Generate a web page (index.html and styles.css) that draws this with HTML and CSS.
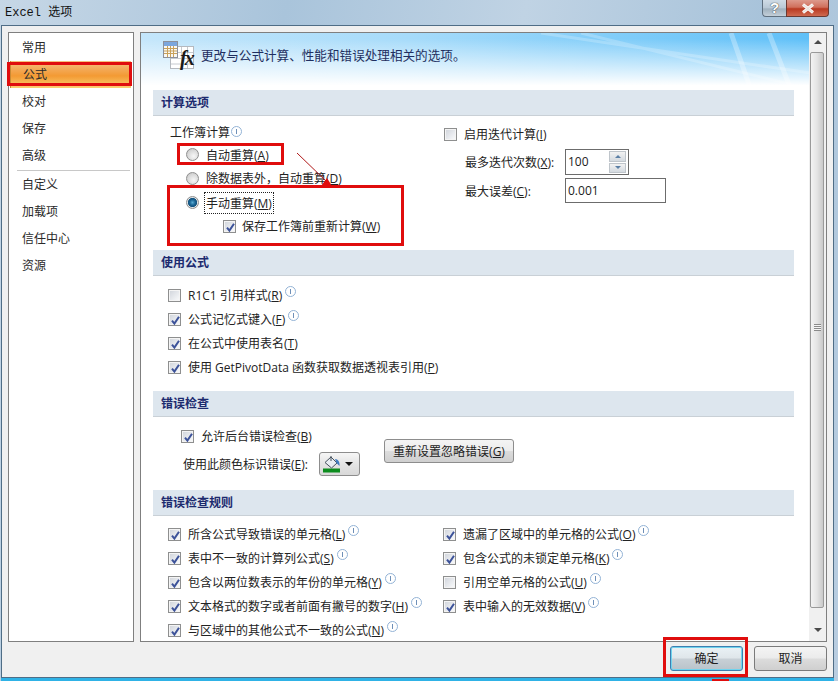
FILE: index.html
```html
<!DOCTYPE html>
<html lang="zh-CN">
<head>
<meta charset="utf-8">
<title>Excel 选项</title>
<link rel="stylesheet" href="styles.css">
</head>
<body>
<svg class="defs" width="0" height="0" aria-hidden="true">
  <symbol id="tick" viewBox="0 0 9 9"><path d="M1 4.6 3.4 7.6 8 .8" fill="none" stroke="#3c5299" stroke-width="2"/></symbol>
</svg>
<div class="window">
  <header class="titlebar">
    <div class="title">Excel 选项</div>
    <div class="winbtns">
      <div class="btn-help">?</div>
      <div class="btn-close"><svg width="16" height="11" viewBox="0 0 16 11"><path d="M3 1.5 13 9.5M13 1.5 3 9.5" stroke="#fff" stroke-width="3" fill="none"/><path d="M3 1.5 13 9.5M13 1.5 3 9.5" stroke="#e9e2dc" stroke-width="1.6" fill="none"/></svg></div>
    </div>
  </header>
  <div class="client">
    <div class="main">
      <nav class="nav">
        <div class="nav-item">常用</div>
        <div class="nav-item active">公式</div>
        <div class="nav-item">校对</div>
        <div class="nav-item">保存</div>
        <div class="nav-item">高级</div>
        <div class="nav-sep"></div>
        <div class="nav-item">自定义</div>
        <div class="nav-item">加载项</div>
        <div class="nav-item">信任中心</div>
        <div class="nav-item">资源</div>
      </nav>
      <section class="panel">
        <div class="content">
          <div class="hero">
            <svg class="streaks" width="669" height="57" viewBox="0 0 669 57" preserveAspectRatio="none" aria-hidden="true">
              <path d="M440 0 669 56M400 0 669 40" stroke="#fff" stroke-opacity=".22" stroke-width="3" fill="none"/>
              <path d="M590 0 610 57M628 0 650 57" stroke="#fff" stroke-opacity=".3" stroke-width="5" fill="none"/>
            </svg>
            <svg class="hero-icon" width="32" height="32" viewBox="0 0 32 32" aria-hidden="true">
              <rect x="7.5" y="6.5" width="23" height="22" fill="#fff" stroke="#b5b9bf"/>
              <path d="M8 12.5H30M8 18.5H30M8 24H30M18.5 7V28M24.5 7V28" stroke="#c6cacf" fill="none"/>
              <rect x="0.5" y="1.5" width="14" height="16" fill="#f8f8f4" stroke="#8d9099"/>
              <rect x="1" y="2" width="13" height="4" fill="#7ba6dc"/>
              <path d="M1 8.5H14M1 11H14M1 13.5H14M4.5 6V17M7.5 6V17M10.5 6V17" stroke="#c9a15a" fill="none"/>
              <text x="17" y="25" class="fx">fx</text>
            </svg>
            <div class="hero-text">更改与公式计算、性能和错误处理相关的选项。</div>
          </div>

          <h2 class="sec">计算选项</h2>
          <div class="calc">
            <div class="calc-left">
              <div class="row short label-row"><span>工作簿计算</span><i class="info"></i></div>
              <div class="row mid radio-row"><i class="radio"></i><span>自动重算(<u>A</u>)</span></div>
              <div class="row radio-row"><i class="radio"></i><span>除数据表外，自动重算(<u>D</u>)</span></div>
              <div class="row radio-row"><i class="radio on"></i><span class="focus">手动重算(<u>M</u>)</span></div>
              <div class="row sub-row"><i class="cb"><svg><use href="#tick"/></svg></i><span>保存工作簿前重新计算(<u>W</u>)</span></div>
            </div>
            <div class="calc-right">
              <div class="row"><i class="cb"></i><span>启用迭代计算(<u>I</u>)</span></div>
              <div class="field-row first">
                <span class="field-label">最多迭代次数(<u>X</u>):</span>
                <div class="spin"><span class="val">100</span>
                  <div class="spin-btns"><b><i class="up"></i></b><b><i class="down"></i></b></div>
                </div>
              </div>
              <div class="field-row second">
                <span class="field-label">最大误差(<u>C</u>):</span>
                <div class="input"><span class="val">0.001</span></div>
              </div>
            </div>
          </div>

          <h2 class="sec">使用公式</h2>
          <div class="formulas">
            <div class="row"><i class="cb"></i><span>R1C1 引用样式(<u>R</u>)</span><i class="info up-info"></i></div>
            <div class="row"><i class="cb"><svg><use href="#tick"/></svg></i><span>公式记忆式键入(<u>F</u>)</span><i class="info up-info"></i></div>
            <div class="row"><i class="cb"><svg><use href="#tick"/></svg></i><span>在公式中使用表名(<u>T</u>)</span></div>
            <div class="row"><i class="cb"><svg><use href="#tick"/></svg></i><span>使用 GetPivotData 函数获取数据透视表引用(<u>P</u>)</span></div>
          </div>

          <h2 class="sec">错误检查</h2>
          <div class="errors">
            <div class="errors-left">
              <div class="row"><i class="cb"><svg><use href="#tick"/></svg></i><span>允许后台错误检查(<u>B</u>)</span></div>
              <div class="color-row">
                <span class="color-label">使用此颜色标识错误(<u>E</u>):</span>
                <div class="color-btn">
                  <svg width="18" height="18" viewBox="0 0 18 18" aria-hidden="true">
                    <path d="M2 7.5 8 2 14 8 8.5 13Z" fill="#e8edf2" stroke="#47525e"/>
                    <path d="M8 1V6" stroke="#47525e" fill="none"/>
                    <path d="M12 4C15 4 17 7 16.5 11 15.5 10 14.5 9 13.5 8Z" fill="#3f7cc0"/>
                    <rect x="0" y="13.5" width="17" height="4" fill="#0c8c1e"/>
                  </svg>
                  <i class="caret"></i>
                </div>
              </div>
            </div>
            <div class="reset-btn">重新设置忽略错误(<u>G</u>)</div>
          </div>

          <h2 class="sec">错误检查规则</h2>
          <div class="rules">
            <div class="rules-col">
              <div class="row"><i class="cb"><svg><use href="#tick"/></svg></i><span>所含公式导致错误的单元格(<u>L</u>)</span><i class="info up-info"></i></div>
              <div class="row"><i class="cb"><svg><use href="#tick"/></svg></i><span>表中不一致的计算列公式(<u>S</u>)</span><i class="info up-info"></i></div>
              <div class="row"><i class="cb"><svg><use href="#tick"/></svg></i><span>包含以两位数表示的年份的单元格(<u>Y</u>)</span><i class="info up-info"></i></div>
              <div class="row"><i class="cb"><svg><use href="#tick"/></svg></i><span>文本格式的数字或者前面有撇号的数字(<u>H</u>)</span><i class="info up-info"></i></div>
              <div class="row"><i class="cb"><svg><use href="#tick"/></svg></i><span>与区域中的其他公式不一致的公式(<u>N</u>)</span><i class="info up-info"></i></div>
            </div>
            <div class="rules-col">
              <div class="row"><i class="cb"><svg><use href="#tick"/></svg></i><span>遗漏了区域中的单元格的公式(<u>O</u>)</span><i class="info up-info"></i></div>
              <div class="row"><i class="cb"><svg><use href="#tick"/></svg></i><span>包含公式的未锁定单元格(<u>K</u>)</span><i class="info up-info"></i></div>
              <div class="row"><i class="cb"></i><span>引用空单元格的公式(<u>U</u>)</span><i class="info up-info"></i></div>
              <div class="row"><i class="cb"><svg><use href="#tick"/></svg></i><span>表中输入的无效数据(<u>V</u>)</span><i class="info up-info"></i></div>
            </div>
          </div>
        </div>
        <div class="scrollbar">
          <div class="arrow"><i class="up dark"></i></div>
          <div class="thumb"><span class="grip"></span></div>
          <div class="arrow"><i class="down dark"></i></div>
        </div>
      </section>
    </div>
    <footer class="footer">
      <div class="dlg-btn default">确定</div>
      <div class="dlg-btn">取消</div>
    </footer>
  </div>

  <div class="mark mark-nav"></div>
  <div class="mark mark-auto"></div>
  <div class="mark mark-manual"></div>
  <div class="mark mark-ok"></div>
  <div class="mark-strip"></div>
  <svg class="mark-arrow" width="40" height="40" viewBox="0 0 40 40" aria-hidden="true">
    <path d="M2 2 31 30" stroke="#b01818" stroke-width="1" fill="none"/>
    <path d="M26 35 37 35 32 27Z" fill="#e00d0d"/>
  </svg>
</div>
</body>
</html>
```
FILE: styles.css
```css
* { box-sizing: border-box; }
html, body { margin: 0; padding: 0; }
body {
  width: 838px; height: 681px; overflow: hidden;
  font: 12px/16px "Open Sans", "Noto Sans CJK SC", sans-serif;
  color: #222;
}
.defs { position: absolute; }
i { font-style: normal; display: block; flex: none; }
u { text-underline-offset: 1px; }

.window {
  position: relative; width: 838px; height: 681px;
  display: flex; flex-direction: column;
  background: linear-gradient(100deg, #c6d7e6 0%, #a9c4db 30%, #c0d3e4 55%, #a8c3da 80%, #b9cde0 100%);
  padding: 0 4px 3px 1px;
}
.titlebar { height: 25px; display: flex; justify-content: space-between; padding-left: 4px; flex: none; }
.title { font: 12px/26px "Liberation Mono", "Noto Sans CJK SC", monospace; color: #111; }
.winbtns { display: flex; margin-right: 5px; height: 17px; }
.btn-help {
  width: 24px; border: 1px solid #5f6f7e; border-top: 0; border-right: 0; border-radius: 0 0 0 4px;
  background: linear-gradient(#cfdbe5 0, #b9c8d5 50%, #9fb0bd 55%, #c3cfd9 100%);
  color: #fff; font: bold 15px/15px "Liberation Sans", sans-serif; text-align: center;
  text-shadow: 0 0 1px #444, 0 0 1px #444;
}
.btn-close {
  width: 43px; border: 1px solid #6b3a32; border-top: 0; border-radius: 0 0 4px 0;
  background: linear-gradient(#dd9a8c 0, #d0705c 45%, #b93a22 55%, #cf6a50 100%);
  display: flex; align-items: center; justify-content: center;
}

.client {
  flex: 1; display: flex; flex-direction: column; min-height: 0;
  background: #f0f0f0; border: 1px solid #4f6d86;
  padding: 6px 6px 0 6px;
  box-shadow: 0 3px 0 #2fb2e6;
}
.main { display: flex; gap: 6px; height: 610px; flex: none; }

.nav { width: 126px; background: #fff; border: 1px solid #7f7f7f; padding-top: 1px; }
.nav-item { height: 27px; line-height: 27px; padding-left: 13px; color: #2a2a2a; }
.nav-item.active {
  margin-left: 1px; margin-right: 2px; padding-left: 12px;
  background: linear-gradient(#f6c27f 0, #f3a650 35%, #f39a33 55%, #fbcf72 100%);
  border-left: 1px solid #c98a33;
}
.nav-sep { height: 1px; background: #c8c8c8; margin: 1px 3px 1px 8px; }
.nav-sep + .nav-item { margin-top: -1px; }

.panel { flex: 1; display: flex; background: #fff; border: 1px solid #7f7f7f; min-width: 0; }
.content { flex: 1; min-width: 0; overflow: hidden; }
.hero {
  position: relative; height: 57px; display: flex; align-items: center; padding-left: 60px;
  background:
    linear-gradient(rgba(255,255,255,0) 10%, #fff 92%),
    linear-gradient(90deg, #c4e6fb 0, #a6dbfa 40%, #5fc0f8 100%);
}
.streaks { position: absolute; left: 0; top: 0; }
.hero-icon { position: absolute; left: 22px; top: 7px; }
.fx { font: italic bold 20px "Liberation Serif", serif; letter-spacing: -2px; fill: #1a1a1a; }
.hero-text { position: relative; margin-top: -11px; color: #1f2f60; font-size: 12.6px; white-space: nowrap; }

.sec {
  margin: 0 15px 0 12px; height: 26px; padding-left: 8px;
  font-size: 12px; line-height: 25px; font-weight: 700; color: #1c2a6e;
  background: #dde6ee; border-bottom: 1px solid #c9d0d6;
}
.row { height: 24px; display: flex; align-items: center; white-space: nowrap; }
.row > span { padding-top: 2px; }
.short { height: 22px; }
.mid { height: 23px; }

.cb {
  width: 13px; height: 13px; margin-right: 7px; padding: 2px;
  border: 1px solid #8e8f8f;
  background: linear-gradient(135deg, #cfd3da, #eef0f3 70%, #fbfbfb);
  box-shadow: inset 0 0 0 1px #f4f4f4;
}
.cb svg { display: block; width: 9px; height: 9px; }
.radio {
  width: 13px; height: 13px; border-radius: 50%; margin-right: 7px;
  border: 1px solid #8f8f8f;
  background: radial-gradient(circle at 60% 65%, #f7f7f7, #d8d8d8 60%, #bdbdbd);
}
.radio.on { background: radial-gradient(circle, #58aad2 0, #1a6494 35%, #15537f 55%, #dfe4e7 64%, #cfcfcf 100%); }
.info {
  width: 11px; height: 11px; border-radius: 50%; border: 1px solid #93b3d6; background: #fff;
  margin-left: 3px; position: relative;
}
.info::after { content: ""; position: absolute; left: 4px; top: 2px; width: 1px; height: 5px; background: #6f90b8; }
.up-info { margin-top: -7px; }
.label-row .info { margin-left: 1px; margin-top: -2px; }

.calc { height: 134px; display: flex; }
.calc-left { width: 289px; padding: 5px 0 0 29px; }
.radio-row { padding-left: 16px; }
.sub-row { padding-left: 53px; }
.sub-row .cb { margin-right: 6px; }
.row > .focus { outline: 1px dotted #222; padding: 3px 1px 1px; margin: 2px 0 0 -1px; }
.calc-right { padding: 6px 0 0 14px; }
.field-row { display: flex; align-items: center; height: 26px; margin-left: 21px; }
.field-row.first { margin-top: 3px; margin-bottom: 3px; }
.field-row.second { height: 25px; }
.field-label { width: 100px; white-space: nowrap; padding-top: 2px; }
.val { padding-left: 2px; line-height: 22px; }
.spin, .input { height: 100%; border: 1px solid #6c6c6c; background: #fff; display: flex; align-items: center; justify-content: space-between; }
.spin { width: 64px; }
.input { width: 101px; }
.spin-btns { width: 17px; height: 22px; margin-right: 2px; display: flex; flex-direction: column; gap: 1px; }
.spin-btns b { flex: 1; background: linear-gradient(#f2f2f2, #d4dae0); border: 1px solid #bfc5cb; display: flex; align-items: center; justify-content: center; }
.up, .down { width: 0; height: 0; border-left: 3px solid transparent; border-right: 3px solid transparent; }
.up { border-bottom: 3px solid #5b7fa5; }
.down { border-top: 3px solid #5b7fa5; }
.up.dark { border-left-width: 4px; border-right-width: 4px; border-bottom: 4px solid #4a4a4a; }
.down.dark { border-left-width: 4px; border-right-width: 4px; border-top: 4px solid #4a4a4a; }

.formulas { height: 115px; padding: 7px 0 0 27px; }

.errors { height: 73px; position: relative; padding: 7px 0 0 40px; display: flex; }
.errors-left { width: 203px; }
.color-row { display: flex; align-items: center; height: 24px; margin: 4px 0 0 2px; white-space: nowrap; }
.color-label { width: 136px; flex: none; padding-top: 2px; }
.color-btn {
  width: 41px; height: 24px; flex: none; border: 1px solid #8d8d8d; border-radius: 3px;
  background: linear-gradient(#f6f6f6, #e4e4e4 50%, #d8d8d8);
  display: flex; align-items: center; padding-left: 3px; gap: 4px;
}
.caret { width: 0; height: 0; border: 4px solid transparent; border-top-color: #111; border-bottom: 0; }
.reset-btn {
  width: 130px; height: 24px; margin: 15px 0 0 0; text-align: center; line-height: 23px; white-space: nowrap;
  border: 1px solid #8d8d8d; border-radius: 3px; align-self: flex-start;
  background: linear-gradient(#f4f4f4 0, #ececec 48%, #dcdcdc 52%, #cfcfcf 100%);
}
.rules { display: grid; grid-template-columns: 275px 1fr; padding: 6px 0 0 27px; }

.scrollbar { width: 17px; flex: none; display: flex; flex-direction: column; background: #f0f0f0; }
.arrow { height: 18px; display: flex; align-items: center; justify-content: center; flex: none; }
.thumb {
  height: 556px; margin: 1px 2px 0 1px; flex: none;
  border: 1px solid #9a9a9a; border-radius: 2px;
  background: linear-gradient(90deg, #f3f3f3, #e4e4e4 50%, #c9c9c9);
  display: flex; align-items: center; justify-content: center; padding-bottom: 6px;
}
.grip { width: 7px; height: 7px; background: repeating-linear-gradient(#8a8a8a 0 1px, #f4f4f4 1px 2px); }
.scrollbar .arrow:last-child { margin-top: auto; padding-bottom: 4px; }

.footer { display: flex; justify-content: flex-end; gap: 11px; padding-top: 4px; }
.dlg-btn {
  width: 73px; height: 25px; text-align: center; line-height: 24px;
  border: 1px solid #7a7a7a; border-radius: 3px;
  background: linear-gradient(#f4f4f4 0, #ebebeb 48%, #dcdcdc 52%, #cfcfcf 100%);
}
.dlg-btn.default {
  border-color: #3c7fb1; box-shadow: inset 0 0 0 1px #6fd3ee;
  background: linear-gradient(#eaf2f6 0, #dfe6ea 48%, #c8d0d6 52%, #b9c3ca 100%);
}

.mark { position: absolute; border: 3px solid #e00d0d; pointer-events: none; }
.mark-nav { left: 7px; top: 62px; width: 125px; height: 24px; }
.mark-auto { left: 177px; top: 143px; width: 107px; height: 22px; }
.mark-manual { left: 167px; top: 185px; width: 237px; height: 61px; }
.mark-ok { left: 663px; top: 637px; width: 85px; height: 40px; }
.mark-strip { position: absolute; left: 712px; top: 679px; width: 17px; height: 2px; background: #e00d0d; }
.mark-arrow { position: absolute; left: 295px; top: 151px; }
```
